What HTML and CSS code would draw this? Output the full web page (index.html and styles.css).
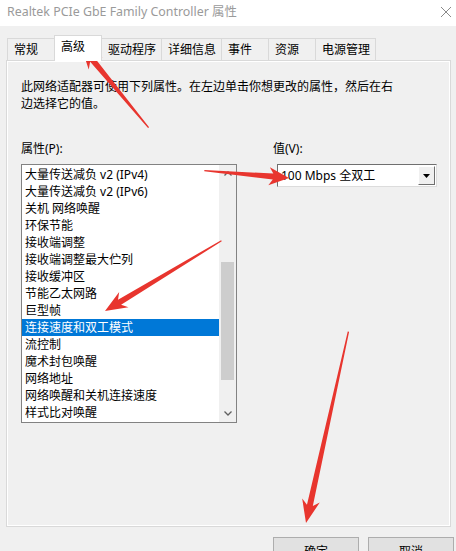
FILE: index.html
```html
<!DOCTYPE html>
<html lang="zh-CN">
<head>
    <meta charset="UTF-8">
    <meta name="viewport" content="width=device-width, initial-scale=1.0">
    <title>Realtek PCIe GbE Family Controller 属性</title>
    <link rel="stylesheet" href="styles.css">
</head>
<body>
    <div class="titlebar">
        <span class="title">Realtek PCIe GbE Family Controller 属性</span>
        <svg class="close" width="12" height="12" viewBox="0 0 12 12">
            <path d="M1 1 L11 11 M11 1 L1 11" stroke="#8a8a8a" stroke-width="1" fill="none"/>
        </svg>
    </div>

    <div class="dialog">
        <div class="tabs">
            <div class="tab">常规</div>
            <div class="tab active">高级</div>
            <div class="tab">驱动程序</div>
            <div class="tab">详细信息</div>
            <div class="tab">事件</div>
            <div class="tab">资源</div>
            <div class="tab">电源管理</div>
        </div>

        <div class="panel">
            <p class="desc">此网络适配器可使用下列属性。在左边单击你想更改的属性，然后在右边选择它的值。</p>

            <div class="props">
                <div class="col-left">
                    <div class="label">属性(P):</div>
                    <div class="listbox">
                        <ul class="items">
                            <li>大量传送减负 v2 (IPv4)</li>
                            <li>大量传送减负 v2 (IPv6)</li>
                            <li>关机 网络唤醒</li>
                            <li>环保节能</li>
                            <li>接收端调整</li>
                            <li>接收端调整最大伫列</li>
                            <li>接收缓冲区</li>
                            <li>节能乙太网路</li>
                            <li>巨型帧</li>
                            <li class="selected">连接速度和双工模式</li>
                            <li>流控制</li>
                            <li>魔术封包唤醒</li>
                            <li>网络地址</li>
                            <li>网络唤醒和关机连接速度</li>
                            <li>样式比对唤醒</li>
                        </ul>
                        <div class="scrollbar">
                            <div class="sb-btn">
                                <svg width="8" height="5" viewBox="0 0 8 5"><path d="M0.5 4.5 L4 1 L7.5 4.5" stroke="#606060" stroke-width="1.3" fill="none"/></svg>
                            </div>
                            <div class="sb-track"><div class="sb-thumb"></div></div>
                            <div class="sb-btn">
                                <svg width="8" height="5" viewBox="0 0 8 5"><path d="M0.5 0.5 L4 4 L7.5 0.5" stroke="#606060" stroke-width="1.3" fill="none"/></svg>
                            </div>
                        </div>
                    </div>
                </div>

                <div class="col-right">
                    <div class="label">值(V):</div>
                    <div class="combo">
                        <span class="combo-text">100 Mbps 全双工</span>
                        <span class="combo-btn">
                            <svg width="7" height="4" viewBox="0 0 7 4"><path d="M0 0 L7 0 L3.5 4 Z" fill="#000"/></svg>
                        </span>
                    </div>
                </div>
            </div>
        </div>

        <div class="actions">
            <button type="button">确定</button>
            <button type="button">取消</button>
        </div>
    </div>

    <!-- red annotation arrows drawn over the dialog -->
    <svg class="arrows" width="456" height="551" viewBox="0 0 456 551">
        <g fill="#e8352e">
            <path transform="translate(81 46) rotate(-129.6)" d="M0 0 L-23 -9 L-18 -3 L-106 -0.7 L-106 0.7 L-18 3 L-23 9 Z"/>
            <path transform="translate(289 178) rotate(5)" d="M0 0 L-20 -9 L-16 -3 L-85 -0.7 L-85 0.7 L-16 3 L-20 9 Z"/>
            <path transform="translate(105 311) rotate(148.9)" d="M0 0 L-22 -9 L-17 -3 L-136 -0.6 L-136 0.6 L-17 3 L-22 9 Z"/>
            <path transform="translate(306 523) rotate(102.5)" d="M0 0 L-23 -9 L-18 -3 L-196 -0.7 L-196 0.7 L-18 3 L-23 9 Z"/>
        </g>
    </svg>
</body>
</html>
```

FILE: styles.css
```css
body {
    margin: 0;
    width: 456px;
    height: 551px;
    overflow: hidden;
    position: relative;
    background-color: #f0f0f0;
    font-family: "Noto Sans", "Noto Sans CJK SC", sans-serif;
    font-size: 12px;
    color: #000;
}

.titlebar {
    height: 26px;
    background-color: #fff;
    display: flex;
    align-items: center;
    justify-content: space-between;
    padding: 0 4px 0 7px;
}

.title {
    color: #9a9a9a;
    font-size: 12.4px;
    line-height: 16px;
    margin-top: -2px;
}

.close {
    margin-top: -3px;
}

.dialog {
    padding-top: 9px;
}

.tabs {
    display: flex;
    align-items: flex-end;
    height: 25px;
    margin: 0 6px 0 7px;
}

.tab {
    box-sizing: border-box;
    height: 22px;
    min-width: 48px;
    padding: 0 5px 0 6px;
    line-height: 21px;
    border: 1px solid #d9d9d9;
    border-bottom: none;
    margin-right: -1px;
    background-color: #f0f0f0;
    white-space: nowrap;
}

.tab.active {
    height: 26px;
    margin-bottom: -1px;
    line-height: 22px;
    background-color: #fff;
    position: relative;
    z-index: 1;
}

.panel {
    box-sizing: border-box;
    height: 467px;
    margin: 0 5px 0 6px;
    padding: 17px 14px 0 14px;
    border: 1px solid #d9d9d9;
    box-shadow: inset 0 0 0 1px #fff;
}

.desc {
    margin: 0;
    width: 376px;
    line-height: 17px;
}

.props {
    display: flex;
    margin-top: 28px;
}

.label {
    line-height: 17px;
}

.col-left {
    width: 216px;
}

.listbox {
    box-sizing: border-box;
    width: 216px;
    height: 259px;
    margin-top: 7px;
    border: 1px solid #828282;
    background-color: #fff;
    display: flex;
}

.items {
    list-style: none;
    margin: 0;
    padding: 1px 0 0 0;
    flex: 1;
    overflow: hidden;
}

.items li {
    height: 17px;
    line-height: 17px;
    padding-left: 3px;
    white-space: nowrap;
}

.items li.selected {
    background-color: #0078d7;
    color: #fff;
}

.scrollbar {
    width: 17px;
    background-color: #f0f0f0;
    display: flex;
    flex-direction: column;
}

.sb-btn {
    height: 17px;
    display: flex;
    align-items: center;
    justify-content: center;
}

.sb-track {
    flex: 1;
}

.sb-thumb {
    height: 118px;
    margin: 80px 2px 0 2px;
    background-color: #cdcdcd;
}

.col-right {
    margin-left: 36px;
}

.combo {
    box-sizing: border-box;
    width: 160px;
    height: 23px;
    margin: 7px 0 0 4px;
    background-color: #fff;
    border: 1px solid;
    border-color: #6f6f6f #dcdcdc #dcdcdc #6f6f6f;
    display: flex;
    align-items: center;
    justify-content: space-between;
}

.combo-text {
    padding-left: 3px;
    line-height: 17px;
    white-space: nowrap;
}

.combo-btn {
    box-sizing: border-box;
    width: 17px;
    height: 19px;
    margin-right: 1px;
    background-color: #f0f0f0;
    border: 1px solid;
    border-color: #fff #6f6f6f #6f6f6f #fff;
    display: flex;
    align-items: center;
    justify-content: center;
}

.actions {
    display: flex;
    justify-content: flex-end;
    gap: 9px;
    margin-top: 10px;
    padding-right: 2px;
}

button {
    box-sizing: border-box;
    width: 86px;
    height: 28px;
    padding: 0;
    border: 1px solid #adadad;
    background-color: #e1e1e1;
    font-family: inherit;
    font-size: 12px;
    color: #000;
}

.arrows {
    position: absolute;
    top: 0;
    left: 0;
    pointer-events: none;
}
```
